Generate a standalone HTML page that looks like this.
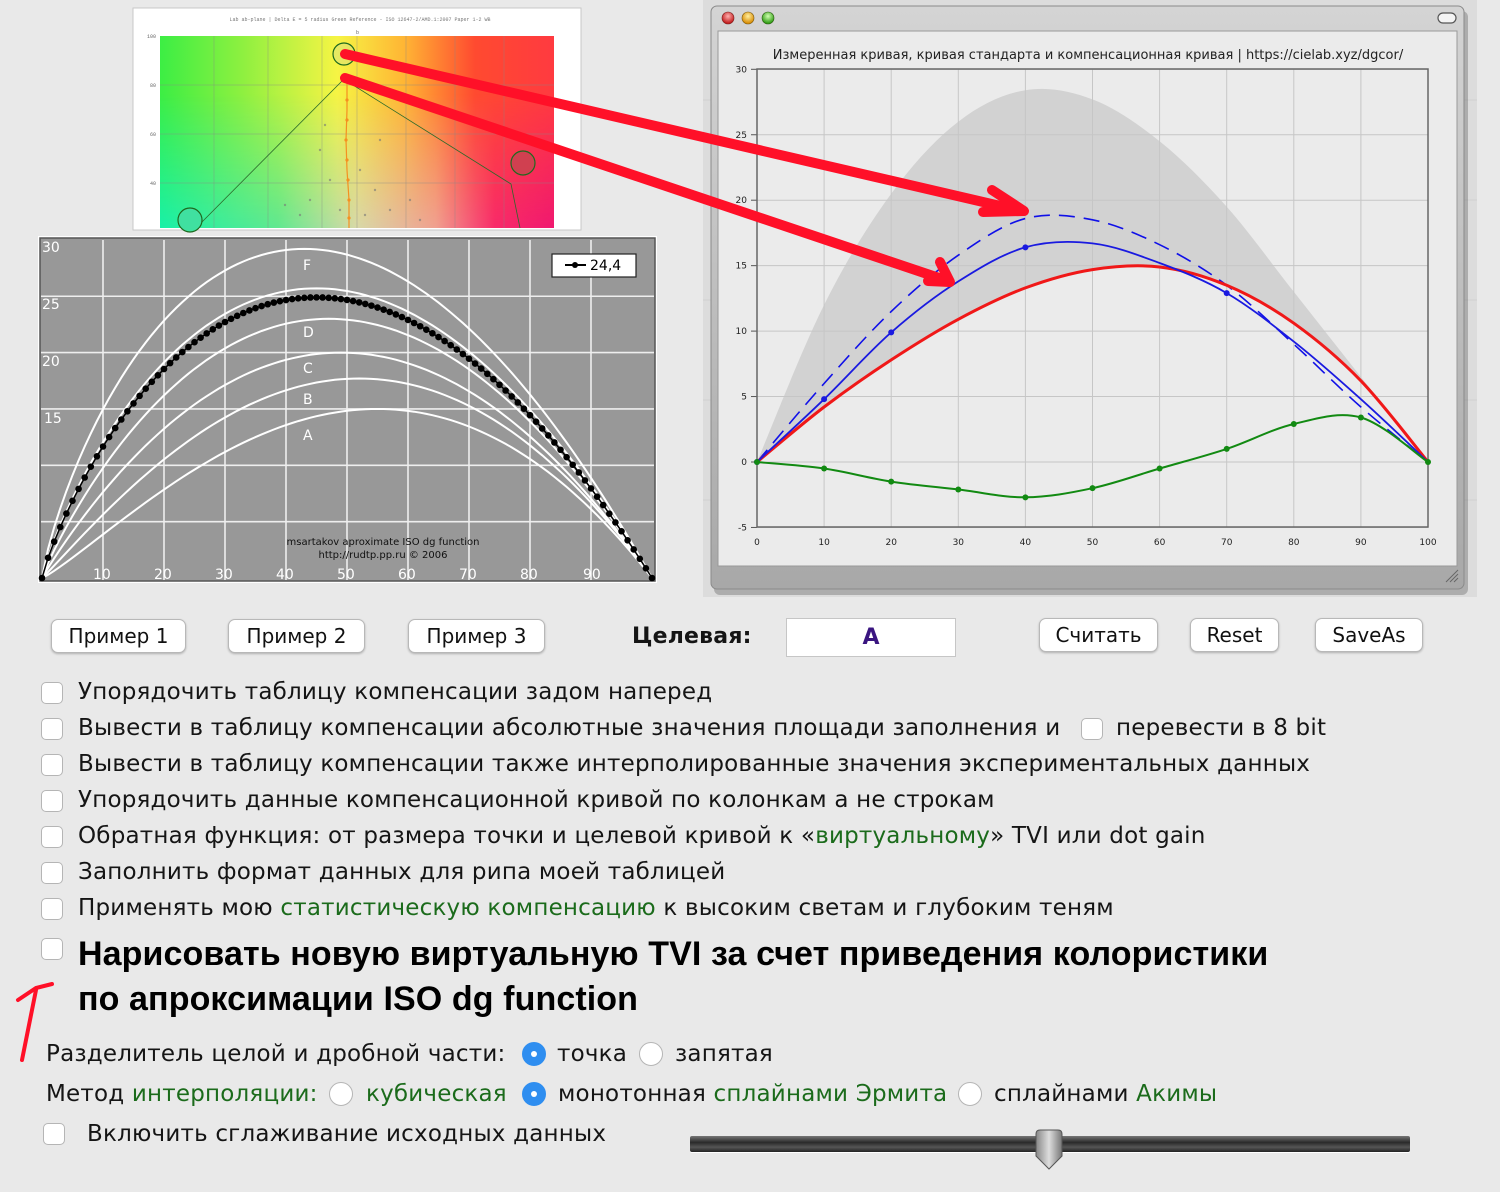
<!DOCTYPE html>
<html><head><meta charset="utf-8">
<style>
*{box-sizing:border-box;margin:0;padding:0}
body{width:1500px;height:1192px;background:#e9e9e9;position:relative;overflow:hidden;font-family:"DejaVu Sans","Liberation Sans",sans-serif;color:#111}
.abs{position:absolute}
.btn{position:absolute;height:34px;background:#fff;border:1px solid #b8b8b8;border-radius:7px;box-shadow:0 1px 2px rgba(0,0,0,.25);font:20px "DejaVu Sans",sans-serif;text-align:center;line-height:32px;color:#111}
.cb{position:absolute;width:22px;height:22px;background:#fff;border:1.5px solid #b5b5b5;border-radius:5px}
.t{position:absolute;font-size:23px;letter-spacing:0.2px;white-space:nowrap;line-height:26px;color:#151515}
.g{color:#1b6b1b}
.rad{position:absolute;width:24px;height:24px;border-radius:50%;background:#fff;border:1.5px solid #b5b5b5}
.rad.on{background:#2f8ef0;border-color:#2f8ef0}
.rad.on::after{content:"";position:absolute;left:8px;top:8px;width:6px;height:6px;border-radius:50%;background:#fff}
</style></head><body>
<svg class="abs" style="left:0;top:0" width="1500" height="600" viewBox="0 0 1500 600">
<defs>
<linearGradient id="hz" x1="0" x2="1" y1="0" y2="0">
<stop offset="0" stop-color="#3cee44"/><stop offset="0.2" stop-color="#8af040"/><stop offset="0.45" stop-color="#f6f444"/><stop offset="0.62" stop-color="#ffb534"/><stop offset="0.8" stop-color="#ff4a30"/><stop offset="1" stop-color="#ff3a40"/></linearGradient>
<linearGradient id="hz2" x1="0" x2="1" y1="0" y2="0">
<stop offset="0" stop-color="#18f0a8"/><stop offset="0.3" stop-color="#60e890"/><stop offset="0.5" stop-color="#d8d8a8"/><stop offset="0.7" stop-color="#f0a090"/><stop offset="0.85" stop-color="#f82a6a"/><stop offset="1" stop-color="#f01870"/></linearGradient>
<linearGradient id="vm" x1="0" x2="0" y1="0" y2="1"><stop offset="0.3" stop-color="#fff" stop-opacity="0"/><stop offset="1" stop-color="#fff" stop-opacity="1"/></linearGradient>
<mask id="mk"><rect x="160" y="36" width="394" height="192" fill="url(#vm)"/></mask>
<linearGradient id="tb" x1="0" x2="0" y1="0" y2="1"><stop offset="0" stop-color="#d4d4d4"/><stop offset="1" stop-color="#a8a8a8"/></linearGradient>
<radialGradient id="rr" cx=".5" cy=".35" r=".6"><stop offset="0" stop-color="#ffb0b0"/><stop offset="1" stop-color="#c01818"/></radialGradient>
<radialGradient id="ry" cx=".5" cy=".35" r=".6"><stop offset="0" stop-color="#fff0a0"/><stop offset="1" stop-color="#d88a00"/></radialGradient>
<radialGradient id="rg" cx=".5" cy=".35" r=".6"><stop offset="0" stop-color="#d0ffb0"/><stop offset="1" stop-color="#2c9a10"/></radialGradient>
</defs>
<rect x="133" y="8" width="448" height="222" fill="#fff" stroke="#c8c8c8"/>
<text x="360" y="21" font-size="5" fill="#777" text-anchor="middle" font-family="Liberation Mono">Lab ab-plane  |  Delta E = 5 radius Green Reference - ISO 12647-2/AMD.1:2007 Paper 1-2 WB</text>
<rect x="160" y="36" width="394" height="192" fill="url(#hz)"/>
<rect x="160" y="36" width="394" height="192" fill="url(#hz2)" mask="url(#mk)"/>
<g stroke="#888" stroke-opacity=".5" stroke-width=".7">
<line x1="214" y1="36" x2="214" y2="228"/><line x1="268" y1="36" x2="268" y2="228"/><line x1="322" y1="36" x2="322" y2="228"/><line x1="357" y1="36" x2="357" y2="228"/><line x1="406" y1="36" x2="406" y2="228"/><line x1="455" y1="36" x2="455" y2="228"/><line x1="504" y1="36" x2="504" y2="228"/>
<line x1="160" y1="85" x2="554" y2="85"/><line x1="160" y1="134" x2="554" y2="134"/><line x1="160" y1="183" x2="554" y2="183"/></g>
<g font-size="5" fill="#666" font-family="Liberation Mono"><text x="147" y="38">100</text><text x="150" y="87">80</text><text x="150" y="136">60</text><text x="150" y="185">40</text><text x="356" y="34">b</text></g>
<g stroke="#2a6a2a" stroke-width=".8" fill="none"><polyline points="196,228 343,80"/><polyline points="345,80 511,184 520,228"/></g>
<polyline points="347,82 347,110 346,140 347,170 349,200 349,228" stroke="#f59020" stroke-width="1.2" fill="none"/>
<g fill="#f59020"><circle cx="347" cy="100" r="1.6"/><circle cx="347" cy="120" r="1.6"/><circle cx="346" cy="140" r="1.6"/><circle cx="347" cy="160" r="1.6"/><circle cx="348" cy="180" r="1.6"/><circle cx="349" cy="200" r="1.6"/><circle cx="349" cy="218" r="1.6"/></g>
<g fill="#777" fill-opacity=".6"><circle cx="320" cy="150" r="1.2"/><circle cx="330" cy="180" r="1.2"/><circle cx="310" cy="200" r="1.2"/><circle cx="360" cy="170" r="1.2"/><circle cx="375" cy="190" r="1.2"/><circle cx="390" cy="210" r="1.2"/><circle cx="300" cy="215" r="1.2"/><circle cx="410" cy="200" r="1.2"/><circle cx="340" cy="210" r="1.2"/><circle cx="365" cy="215" r="1.2"/><circle cx="285" cy="205" r="1.2"/><circle cx="420" cy="220" r="1.2"/><circle cx="380" cy="140" r="1.2"/><circle cx="325" cy="125" r="1.2"/></g>
<circle cx="344" cy="54" r="11" fill="#d8e080" fill-opacity=".5" stroke="#1e6a1e" stroke-width="1.2"/>
<circle cx="523" cy="163" r="12" fill="#d04050" stroke="#1e6a1e" stroke-width="1.2"/>
<circle cx="190" cy="220" r="12" fill="#40e0a0" stroke="#1e6a1e" stroke-width="1.2"/>
<rect x="38" y="236" width="619" height="347" fill="#fff"/>
<rect x="40" y="238" width="615" height="343" fill="#989898" stroke="#555" stroke-width="1.5"/>
<g id="lgrid" stroke="#eee" stroke-width="1.6"></g>
<g id="lcurves"></g>
<rect x="552" y="254" width="84" height="23" fill="#fff" stroke="#222" stroke-width="1.2"/>
<line x1="565" y1="265" x2="586" y2="265" stroke="#000" stroke-width="2"/><circle cx="575" cy="265" r="3" fill="#000"/>
<text x="590" y="270" font-size="14" font-family="DejaVu Sans">24,4</text>
<g fill="#fff" font-size="14" font-family="DejaVu Sans"><text x="42" y="252">30</text><text x="42" y="309">25</text><text x="42" y="366">20</text><text x="44" y="423">15</text>
<text x="303" y="270">F</text><text x="303" y="337">D</text><text x="303" y="373">C</text><text x="303" y="404">B</text><text x="303" y="440">A</text>
<text x="93" y="579">10</text><text x="154" y="579">20</text><text x="215" y="579">30</text><text x="276" y="579">40</text><text x="337" y="579">50</text><text x="398" y="579">60</text><text x="459" y="579">70</text><text x="520" y="579">80</text><text x="583" y="579">90</text></g>
<g fill="#111" font-size="10" font-family="DejaVu Sans" text-anchor="middle"><text x="383" y="545">msartakov aproximate ISO dg function</text><text x="383" y="558">http://rudtp.pp.ru © 2006</text></g>
<rect x="703" y="0" width="774" height="597" fill="#dcdcdc"/>
<g stroke="#cfcfcf" stroke-width="1"><line x1="703" y1="100" x2="1477" y2="100"/><line x1="703" y1="200" x2="1477" y2="200"/><line x1="703" y1="300" x2="1477" y2="300"/><line x1="703" y1="400" x2="1477" y2="400"/><line x1="703" y1="500" x2="1477" y2="500"/></g>
<rect x="714" y="11" width="754" height="584" rx="6" fill="#555" opacity=".35"/>
<rect x="711" y="6" width="753" height="583" rx="6" fill="url(#tb)" stroke="#8a8a8a"/>
<rect x="718" y="31" width="739" height="535" fill="#ebebeb" stroke="#999"/>
<circle cx="728" cy="18" r="6" fill="url(#rr)" stroke="#7a2020" stroke-width=".6"/>
<circle cx="748" cy="18" r="6" fill="url(#ry)" stroke="#7a5a10" stroke-width=".6"/>
<circle cx="768" cy="18" r="6" fill="url(#rg)" stroke="#2a5a10" stroke-width=".6"/>
<rect x="1438" y="13" width="18" height="10" rx="5" fill="#f4f4f4" stroke="#555" stroke-width="1.2"/>
<g stroke="#666" stroke-width="1"><line x1="1446" y1="582" x2="1458" y2="570"/><line x1="1450" y1="582" x2="1458" y2="574"/><line x1="1454" y1="582" x2="1458" y2="578"/></g>
<text x="1088" y="59" font-size="13" font-family="DejaVu Sans" text-anchor="middle" fill="#222">Измеренная кривая, кривая стандарта и компенсационная кривая | https://cielab.xyz/dgcor/</text>
<g id="rchart"></g>
</svg>
<svg class="abs" style="left:0;top:0;z-index:5" width="1500" height="1192" viewBox="0 0 1500 1192">
<g stroke="#ff1028" stroke-width="10" stroke-linecap="round" fill="none" stroke-linejoin="round">
<line x1="345" y1="54" x2="1022" y2="211"/>
<polyline points="992,190 1024,211 983,212"/>
<line x1="345" y1="78" x2="948" y2="281"/>
<polyline points="940,262 950,282 928,281"/>
</g>
<g stroke="#ff1028" stroke-width="4" stroke-linecap="round" fill="none"><line x1="22" y1="1060" x2="36" y2="990"/><polyline points="18,1000 36,988 52,984"/></g>
</svg>

<div class="btn" style="left:51px;top:619px;width:135px">Пример 1</div>
<div class="btn" style="left:228px;top:619px;width:137px">Пример 2</div>
<div class="btn" style="left:408px;top:619px;width:137px">Пример 3</div>
<div class="t" style="left:632px;top:624px;font-weight:bold;font-size:22px">Целевая:</div>
<div class="abs" style="left:786px;top:618px;width:170px;height:39px;background:#fff;border:1px solid #c6c6c6;text-align:center;font:bold 22px 'DejaVu Sans',sans-serif;line-height:37px;color:#3a1580">A</div>
<div class="btn" style="left:1039px;top:618px;width:119px">Считать</div>
<div class="btn" style="left:1190px;top:618px;width:89px">Reset</div>
<div class="btn" style="left:1315px;top:618px;width:108px">SaveAs</div>

<div class="cb" style="left:41px;top:682px"></div><div class="t" style="left:78px;top:679px">Упорядочить таблицу компенсации задом наперед</div>
<div class="cb" style="left:41px;top:718px"></div><div class="t" style="left:78px;top:715px">Вывести в таблицу компенсации абсолютные значения площади заполнения и</div>
<div class="cb" style="left:1081px;top:718px"></div><div class="t" style="left:1116px;top:715px">перевести в 8 bit</div>
<div class="cb" style="left:41px;top:754px"></div><div class="t" style="left:78px;top:751px">Вывести в таблицу компенсации также интерполированные значения экспериментальных данных</div>
<div class="cb" style="left:41px;top:790px"></div><div class="t" style="left:78px;top:787px">Упорядочить данные компенсационной кривой по колонкам а не строкам</div>
<div class="cb" style="left:41px;top:826px"></div><div class="t" style="left:78px;top:823px">Обратная функция: от размера точки и целевой кривой к «<span class="g">виртуальному</span>» TVI или dot gain</div>
<div class="cb" style="left:41px;top:862px"></div><div class="t" style="left:78px;top:859px">Заполнить формат данных для рипа моей таблицей</div>
<div class="cb" style="left:41px;top:898px"></div><div class="t" style="left:78px;top:895px">Применять мою <span class="g">статистическую компенсацию</span> к высоким светам и глубоким теням</div>
<div class="cb" style="left:41px;top:938px"></div>
<div class="t" style="left:78px;top:934px;font:bold 34px 'Liberation Sans',sans-serif;letter-spacing:0.1px;line-height:40px;color:#000">Нарисовать новую виртуальную TVI за счет приведения колористики</div>
<div class="t" style="left:78px;top:979px;font:bold 34px 'Liberation Sans',sans-serif;letter-spacing:0.1px;line-height:40px;color:#000">по апроксимации ISO dg function</div>

<div class="t" style="left:46px;top:1041px">Разделитель целой и дробной части:</div>
<div class="rad on" style="left:522px;top:1042px"></div><div class="t" style="left:557px;top:1041px">точка</div>
<div class="rad" style="left:639px;top:1042px"></div><div class="t" style="left:675px;top:1041px">запятая</div>
<div class="t" style="left:46px;top:1081px">Метод <span class="g">интерполяции:</span></div>
<div class="rad" style="left:329px;top:1082px"></div><div class="t g" style="left:366px;top:1081px">кубическая</div>
<div class="rad on" style="left:522px;top:1082px"></div><div class="t" style="left:558px;top:1081px">монотонная <span class="g">сплайнами Эрмита</span></div>
<div class="rad" style="left:958px;top:1082px"></div><div class="t" style="left:994px;top:1081px">сплайнами <span class="g">Акимы</span></div>
<div class="cb" style="left:43px;top:1123px"></div><div class="t" style="left:87px;top:1121px">Включить сглаживание исходных данных</div>
<div class="abs" style="left:690px;top:1136px;width:720px;height:16px;border-radius:2px;background:linear-gradient(#777,#2a2a2a 40%,#555 70%,#222);box-shadow:0 1px 0 #fff"></div>
<svg class="abs" style="left:1030px;top:1128px" width="38" height="44"><defs><linearGradient id="th" x1="0" x2="1"><stop offset="0" stop-color="#888"/><stop offset=".5" stop-color="#ddd"/><stop offset="1" stop-color="#777"/></linearGradient></defs><path d="M6 6 Q6 2 10 2 L28 2 Q32 2 32 6 L32 28 L19 41 L6 28 Z" fill="url(#th)" stroke="#555"/></svg>

<script>
(function(){
var NS="http://www.w3.org/2000/svg";
function el(p,t,a){var e=document.createElementNS(NS,t);for(var k in a)e.setAttribute(k,a[k]);p.appendChild(e);return e;}
var lg=document.getElementById('lgrid'),lc=document.getElementById('lcurves');
function LX(x){return 42+6.1*x}function LY(v){return 578-11.27*v}
for(var i=1;i<10;i++)el(lg,'line',{x1:LX(i*10),y1:240,x2:LX(i*10),y2:580});
for(var j=1;j<6;j++)el(lg,'line',{x1:41,y1:LY(j*5),x2:654,y2:LY(j*5)});
function sk(x,P,pk){var p=Math.log(.5)/Math.log(pk/100);var t=Math.pow(x/100,p);return P*4*t*(1-t);}
var cs=[[15,55],[17.7,52],[20,49],[23,47],[25.7,45],[29.2,43]];
cs.forEach(function(c){var d='';for(var x=0;x<=100;x+=1){d+=(x?'L':'M')+LX(x).toFixed(1)+' '+LY(sk(x,c[0],c[1])).toFixed(1);}el(lc,'path',{d:d,fill:'none',stroke:'#fff','stroke-width':2});});
var d='';for(var x=0;x<=100;x+=1){d+=(x?'L':'M')+LX(x).toFixed(1)+' '+LY(sk(x,24.9,45)).toFixed(1);}
el(lc,'path',{d:d,fill:'none',stroke:'#000','stroke-width':1.5});
for(var x=0;x<=100;x+=1)el(lc,'circle',{cx:LX(x),cy:LY(sk(x,24.9,45)),r:3.3,fill:'#000'});
var rc=document.getElementById('rchart');
function RX(x){return 757+6.71*x}function RY(v){return 462-13.09*v}
function cr(pts){var s='M'+RX(pts[0][0])+' '+RY(pts[0][1]);for(var i=0;i<pts.length-1;i++){var p0=pts[i>0?i-1:i],p1=pts[i],p2=pts[i+1],p3=pts[i+2<pts.length?i+2:i+1];
var a=[RX(p1[0])+(RX(p2[0])-RX(p0[0]))/6,RY(p1[1])+(RY(p2[1])-RY(p0[1]))/6],b=[RX(p2[0])-(RX(p3[0])-RX(p1[0]))/6,RY(p2[1])-(RY(p3[1])-RY(p1[1]))/6];
s+='C'+a[0].toFixed(1)+' '+a[1].toFixed(1)+' '+b[0].toFixed(1)+' '+b[1].toFixed(1)+' '+RX(p2[0]).toFixed(1)+' '+RY(p2[1]).toFixed(1);}return s;}
var up=[[0,0],[10,12],[20,20.5],[30,26],[40,28.4],[50,27.7],[60,24.5],[70,19.5],[80,13],[90,6.5],[100,0]];
var red=[[0,0],[10,4.2],[20,7.8],[30,10.9],[40,13.3],[50,14.7],[60,14.9],[70,13.5],[80,10.6],[90,6.2],[100,0]];
var dash=[[0,0],[10,6],[20,11.5],[30,15.8],[40,18.6],[50,18.5],[60,16.6],[70,13.5],[80,9],[90,4.2],[100,0]];
var blue=[[0,0],[10,4.8],[20,9.9],[30,13.8],[40,16.4],[50,16.7],[60,15.2],[70,12.9],[80,9.2],[90,4.8],[100,0]];
var grn=[[0,0],[10,-0.5],[20,-1.5],[30,-2.1],[40,-2.7],[50,-2],[60,-0.5],[70,1],[80,2.9],[90,3.4],[100,0]];
var redrev=red.slice().reverse();
var band=cr(up)+' '+cr(redrev).replace(/^M/,'L')+'Z';
el(rc,'path',{d:band,fill:'#d2d2d2'});
for(var i=0;i<=10;i++)el(rc,'line',{x1:RX(i*10),y1:69,x2:RX(i*10),y2:527,stroke:'#c6c6c6'});
for(var v=-5;v<=30;v+=5){el(rc,'line',{x1:757,y1:RY(v),x2:1428,y2:RY(v),stroke:'#c6c6c6'});el(rc,'line',{x1:751,y1:RY(v),x2:757,y2:RY(v),stroke:'#555'});
var t=el(rc,'text',{x:747,y:RY(v)+3,'font-size':9,'text-anchor':'end','font-family':'DejaVu Sans',fill:'#222'});t.textContent=v;}
el(rc,'rect',{x:757,y:69,width:671,height:458,fill:'none',stroke:'#666','stroke-width':1.5});
for(var i=0;i<=10;i++){var t=el(rc,'text',{x:RX(i*10),y:545,'font-size':9,'text-anchor':'middle','font-family':'DejaVu Sans',fill:'#222'});t.textContent=i*10;}
el(rc,'path',{d:cr(dash),fill:'none',stroke:'#1010e8','stroke-width':1.6,'stroke-dasharray':'16 9'});
el(rc,'path',{d:cr(red),fill:'none',stroke:'#f01818','stroke-width':3});
el(rc,'path',{d:cr(blue),fill:'none',stroke:'#1a1ae0','stroke-width':1.8});
[[0,0],[10,4.8],[20,9.9],[40,16.4],[70,12.9]].forEach(function(p){el(rc,'circle',{cx:RX(p[0]),cy:RY(p[1]),r:3,fill:'#1a1ae0'});});
el(rc,'path',{d:cr(grn),fill:'none',stroke:'#128a12','stroke-width':2});
grn.forEach(function(p){el(rc,'circle',{cx:RX(p[0]),cy:RY(p[1]),r:3,fill:'#128a12'});});
})();
</script>
</body></html>
